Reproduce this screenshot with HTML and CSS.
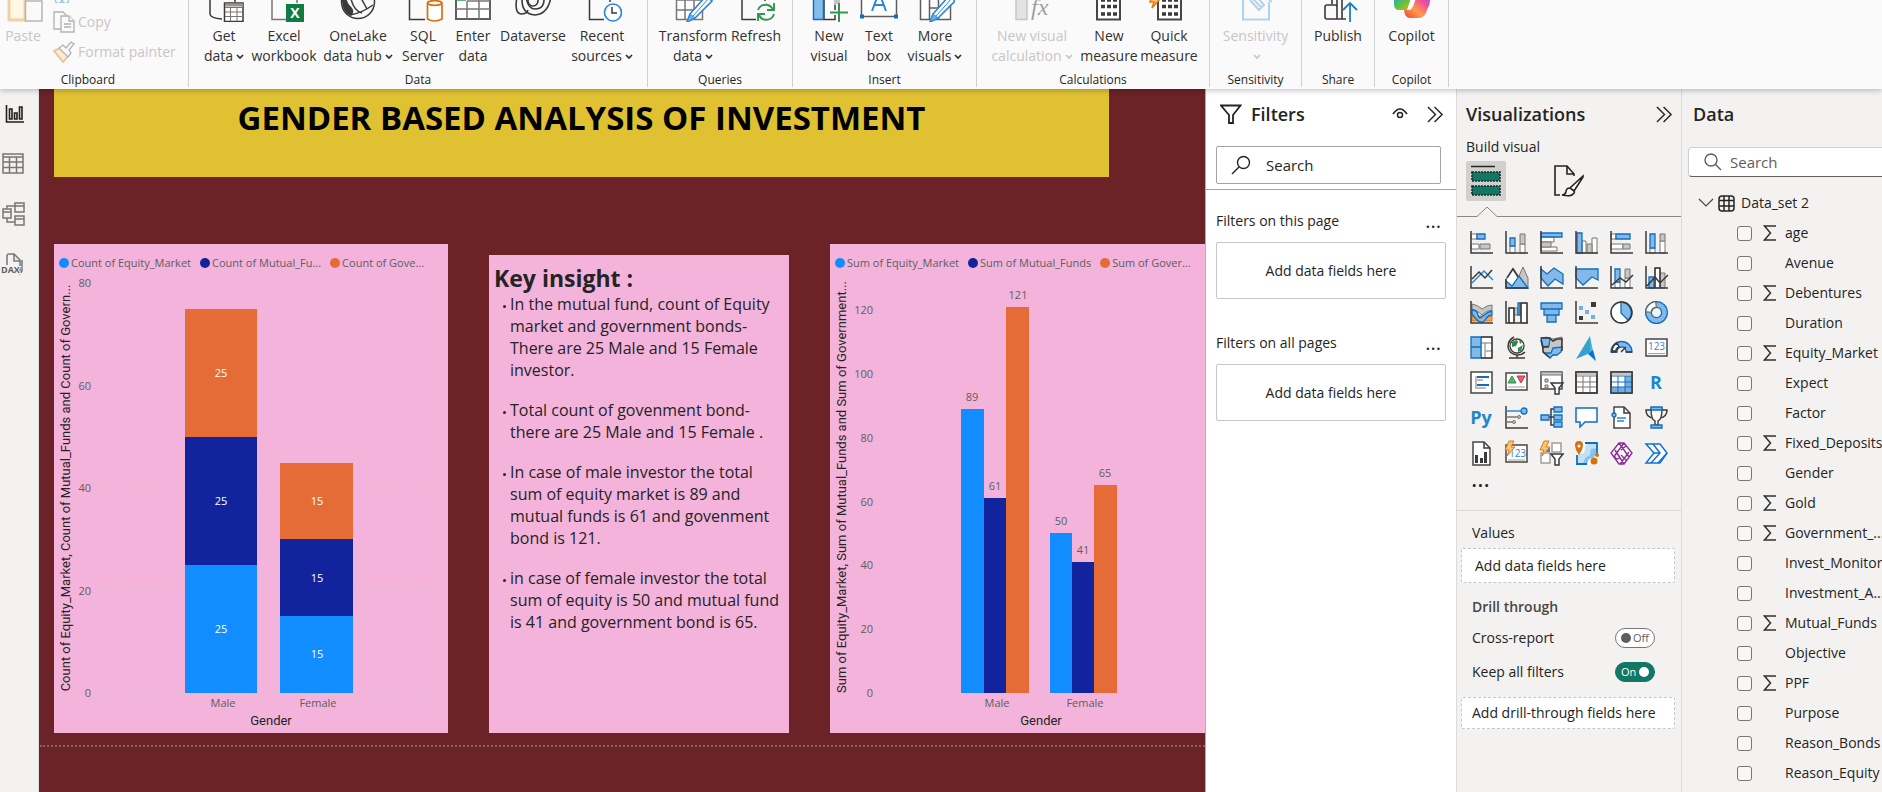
FILE: index.html
```html
<!DOCTYPE html>
<html lang="en">
<head>
<meta charset="utf-8">
<title>Gender based analysis of investment</title>
<link rel="stylesheet" href="styles.css">
</head>
<body>
<svg class="defs" width="0" height="0" aria-hidden="true">
  <defs>
    <linearGradient id="cop1" x1="0" y1="0" x2="1" y2="1"><stop offset="0" stop-color="#1fa3d8"/><stop offset=".5" stop-color="#5fc43f"/><stop offset="1" stop-color="#f5a623"/></linearGradient>
    <linearGradient id="cop2" x1="0" y1="1" x2="1" y2="0"><stop offset="0" stop-color="#f0442e"/><stop offset=".4" stop-color="#ff9a4d"/><stop offset=".7" stop-color="#f2528f"/><stop offset="1" stop-color="#a34cf0"/></linearGradient>
    <symbol id="pencil" viewBox="0 0 28 24"><path d="M1 23l3-8L20-3l6 5L9 19z" fill="#fff" stroke="#2b88d8" stroke-width="1.6"/><path d="M1 23l3-8 5 4z" fill="#69afe5" stroke="#2b88d8"/><path d="M7 17L24-2" stroke="#2b88d8"/></symbol>
    <symbol id="caret" viewBox="0 0 8 6"><path d="M1 1l3 3 3-3" fill="none" stroke="currentColor" stroke-width="1.7"/></symbol>
    <symbol id="sigma" viewBox="0 0 14 16"><path d="M13 1H1.500l6 7-6 7H13" fill="none" stroke="#323130" stroke-width="1.500"/></symbol>
    <symbol id="dbl" viewBox="0 0 18 18"><path d="M1 1l8 8-8 8M8 1l8 8-8 8" fill="none" stroke="#252423" stroke-width="1.500"/></symbol>
  </defs>
</svg>

<header class="ribbon">
  <section class="group clipboard">
    <div class="tools">
      <button class="tool off"><svg width="40" height="22"><path d="M6-4v24h16V-4" fill="#fff7e6" stroke="#f3cfa4" stroke-width="3"/><path d="M22.500 1H39v20H22.500z" fill="#fafafa" stroke="#b8b6b4" stroke-width="1.500"/></svg><span>Paste</span></button>
      <div class="side">
        <svg class="cut" width="16" height="3"><path d="M4-2a3 3 0 1 0 3 0M11-2a3 3 0 1 0 3 0" fill="none" stroke="#9cc6e6" stroke-width="1.500"/></svg>
        <button class="mini"><svg width="22" height="22" fill="#fafafa" stroke="#b5b3b1" stroke-width="1.300"><path d="M1 1h9l3 3v14H1z"/><path d="M8 5h8l5 5v11H8z"/><path d="M16 5v5h5M11 13h7M11 16h7"/></svg>Copy</button>
        <button class="mini"><svg width="22" height="22"><path d="M1 10l8-4 7 8-6 7z" fill="#fdebd7" stroke="#efb98a" stroke-width="1.500"/><path d="M6 7l4-3 3 3 5-6 3 2-5 6 2 3-3 4z" fill="#fafafa" stroke="#b5b3b1" stroke-width="1.300"/></svg>Format painter</button>
      </div>
    </div>
    <h2>Clipboard</h2>
  </section>
  <section class="group data">
    <div class="tools">
      <button class="tool"><svg width="40" height="22"><path d="M6-4V14q0 4 12 5M31-2v4" fill="none" stroke="#3b3a39" stroke-width="1.500"/><path d="M20.500 3H39v18.500H20.500z" fill="#fff" stroke="#3b3a39" stroke-width="1.500"/><path d="M21 3.500h18v3H21z" fill="#979593"/><path d="M21 7.500h18M21 12h18M21 16.500h18M26.500 7v14M33 7v14" stroke="#797775"/></svg><span>Get<br>data<svg class="ct"><use href="#caret"/></svg></span></button>
      <button class="tool"><svg width="40" height="22"><path d="M8-4v23.500h15M33-2v5" fill="none" stroke="#797775" stroke-width="1.500"/><path d="M22 4h18v18H22z" fill="#107c41"/><text x="31" y="18" class="xl">X</text></svg><span>Excel<br>workbook</span></button>
      <button class="tool"><svg width="40" height="22"><circle cx="20" cy="2" r="16.500" fill="#fafafa" stroke="#3b3a39" stroke-width="1.500"/><path d="M4-3Q3 12 13 16Q17 12 14 8Q9 4 8-3z" fill="#3b3a39"/><path d="M13-1q3 12 11 14M12 15q12-2 23-10M23-2l6 11" fill="none" stroke="#3b3a39" stroke-width="1.500"/></svg><span>OneLake<br>data hub<svg class="ct"><use href="#caret"/></svg></span></button>
      <button class="tool"><svg width="40" height="22"><path d="M6.500-4v23.500H22M34-3v4" fill="none" stroke="#3b3a39" stroke-width="1.500"/><path d="M24.500 3v16q7 4 14.500 0V3" fill="#fff" stroke="#d8700f" stroke-width="1.700"/><ellipse cx="31.700" cy="3" rx="7.200" ry="2.300" fill="#fff" stroke="#d8700f" stroke-width="1.700"/></svg><span>SQL<br>Server</span></button>
      <button class="tool"><svg width="40" height="22"><path d="M3-3h34v22H3z" fill="#fff" stroke="#605e5c" stroke-width="2"/><path d="M3 9h34M14 1v18M26-3v22M14 1h23" stroke="#797775" stroke-width="1.500"/><path d="M3 0h10" stroke="#2e9e4b" stroke-width="1.500"/></svg><span>Enter<br>data</span></button>
      <button class="tool"><svg width="40" height="22" fill="none" stroke="#3b3a39" stroke-width="1.600"><path d="M4-3q-3 16 4 17q6 0 7-4M9 0q0 14 13 15Q35 14 38-3M13-3q2 12 9 12q10 0 9-12"/><circle cx="20" cy="1" r="5"/></svg><span>Dataverse</span></button>
      <button class="tool"><svg width="40" height="22"><path d="M7.500-4v23.500H22M28-3v5" fill="none" stroke="#3b3a39" stroke-width="1.500"/><circle cx="31" cy="12.500" r="8.500" fill="#fff" stroke="#2b88d8" stroke-width="1.700"/><path d="M30 7v6h5" fill="none" stroke="#3b3a39" stroke-width="1.500"/></svg><span>Recent<br>sources<svg class="ct"><use href="#caret"/></svg></span></button>
    </div>
    <h2>Data</h2>
  </section>
  <section class="group queries">
    <div class="tools">
      <button class="tool"><svg width="40" height="22"><path d="M3.500-4h26v23.500h-26zM3.500 0h26M3.500 10h26M12-4v23M21-4v23" fill="#fff" stroke="#797775" stroke-width="1.500"/><use href="#pencil" x="13" y="-1" width="28" height="24"/></svg><span>Transform<br>data<svg class="ct"><use href="#caret"/></svg></span></button>
      <button class="tool"><svg width="40" height="22"><path d="M6-4v23.500h14M29-3v4" fill="none" stroke="#3b3a39" stroke-width="1.500"/><path d="M22 10a8 8 0 0 1 15 0M38 14a8 8 0 0 1-15 1M38 3v7h-7M22 21v-7h7" fill="none" stroke="#2e9950" stroke-width="1.900"/></svg><span>Refresh</span></button>
    </div>
    <h2>Queries</h2>
  </section>
  <section class="group insert">
    <div class="tools">
      <button class="tool"><svg width="40" height="22"><path d="M15-4h11v23.500H15z" fill="#fff" stroke="#3b3a39" stroke-width="1.500"/><path d="M25-4h6V5h-6z" fill="#c8c6c4"/><path d="M4.500-4h10v23.500h-10z" fill="#83beec" stroke="#106ebe" stroke-width="1.500"/><path d="M20 12.500h19M30 4v18" stroke="#fafafa" stroke-width="5"/><path d="M21 12.500h18M30 3v19" stroke="#2e9950" stroke-width="2"/></svg><span>New<br>visual</span></button>
      <button class="tool"><svg width="40" height="22"><path d="M2.500-4v20.500h35V-4" fill="#fff" stroke="#605e5c" stroke-width="1.500"/><path d="M13 11l6-16h2l6 16M15.500 5h9" fill="none" stroke="#2b88d8" stroke-width="2"/><path d="M1 14.500h4v4H1zM35 14.500h4v4h-4z" fill="#106ebe"/></svg><span>Text<br>box</span></button>
      <button class="tool"><svg width="40" height="22"><path d="M5.500-4h9v23.500h-9zM14.500 8h9v11.500h-9zM23.500-4h12v23.500h-12z" fill="#fff" stroke="#605e5c" stroke-width="1.500"/><use href="#pencil" x="14" y="-1" width="28" height="24"/></svg><span>More<br>visuals<svg class="ct"><use href="#caret"/></svg></span></button>
    </div>
    <h2>Insert</h2>
  </section>
  <section class="group calcs">
    <div class="tools">
      <button class="tool off"><svg width="40" height="22"><path d="M4-4h11v23.500H4z" fill="#e4e3e2" stroke="#c8c6c4" stroke-width="1.500"/><text x="19" y="15" class="fx">fx</text></svg><span>New visual<br>calculation<svg class="ct"><use href="#caret"/></svg></span></button>
      <button class="tool"><svg width="40" height="22"><path d="M8-4h23v23.500H8z" fill="#fff" stroke="#484644" stroke-width="2"/><path d="M12 0h16M12 6.500h16M12 14h16" stroke="#3b3a39" stroke-width="3.500" stroke-dasharray="4 2"/></svg><span>New<br>measure</span></button>
      <button class="tool"><svg width="40" height="22"><path d="M9-4h23v23.500H9z" fill="#fff" stroke="#484644" stroke-width="2"/><path d="M13 0h16M13 6.500h16M13 14h16" stroke="#3b3a39" stroke-width="3.500" stroke-dasharray="4 2"/><path d="M3-4L1 2h4L3 8l8-9V-4z" fill="#fdc37a" stroke="#e07b10" stroke-width="1.500"/></svg><span>Quick<br>measure</span></button>
    </div>
    <h2>Calculations</h2>
  </section>
  <section class="group sens">
    <div class="tools">
      <button class="tool off"><svg width="40" height="22"><path d="M7-4v23.500h26V2" fill="none" stroke="#b0d3ec" stroke-width="2"/><path d="M14 0l9 10 5-5-7-8M17-1l8 8M31-2l5 4" fill="none" stroke="#b0d3ec" stroke-width="2"/></svg><span>Sensitivity<br><svg class="ct"><use href="#caret"/></svg></span></button>
    </div>
    <h2>Sensitivity</h2>
  </section>
  <section class="group share">
    <div class="tools">
      <button class="tool"><svg width="40" height="22" fill="none"><path d="M14-4v8M7 7q0-2 2-2h8q2 0 2 2v12H9q-2 0-2-2zM19-4v23h9M24-4V19" stroke="#3b3a39" stroke-width="1.600"/><path d="M32 22V3M25 10l7-7 7 7" stroke="#1b7fc4" stroke-width="1.800"/></svg><span>Publish</span></button>
    </div>
    <h2>Share</h2>
  </section>
  <section class="group copi">
    <div class="tools">
      <button class="tool"><svg width="40" height="22"><path d="M2-4v8q0 6 5 6h8l5-14z" fill="url(#cop1)"/><path d="M12 10h5q3 0 4-5l2-9h15q1 8-3 14-2 8-9 8H18q-5 0-6-8z" fill="url(#cop2)"/><path d="M16 8l4-12h5l-4 10q-1 2-3 2z" fill="#fff"/></svg><span>Copilot</span></button>
    </div>
    <h2>Copilot</h2>
  </section>
</header>

<main class="work">
  <nav class="rail">
    <button aria-label="Report view"><svg width="24" height="24" fill="none" stroke="#201f1e" stroke-width="1.600"><path d="M4.500 3v17H22M7.500 7h2.500v10H7.500zM12.500 11H15v6h-2.500zM17.500 5H20v12h-2.500z"/></svg></button>
    <button aria-label="Table view"><svg width="24" height="24" fill="none" stroke="#797775" stroke-width="1.500"><path d="M1 2h20v19H1zM1 5h20M1 10h20M1 15.500h20M7.500 5v16M14.500 5v16"/></svg></button>
    <button aria-label="Model view"><svg width="24" height="24" fill="none" stroke="#797775" stroke-width="1.500"><path d="M1 7h8v9H1zM1 10h8M13 1h9v9h-9zM13 4h9M13 14h9v9h-9zM13 17h9M5 7V4h8M5 16v4h8"/></svg></button>
    <button aria-label="DAX query view"><svg width="24" height="24" fill="none" stroke="#797775" stroke-width="1.500"><path d="M5 13V4q0-2 2-2h5l6 6v10q0 2-2 2M12 2v7h6M20 8v10q0 3-3 4"/><text x="-1" y="21" class="dax">DAX</text></svg></button>
  </nav>

  <div class="canvas">
    <h1>GENDER BASED ANALYSIS OF INVESTMENT</h1>
    <div class="cards">
      <figure class="card chart">
        <ul class="legend"><li class="c1">Count of Equity_Market</li><li class="c2">Count of Mutual_Fu...</li><li class="c3">Count of Gove...</li></ul>
        <svg class="plot" viewBox="54 274 394 459">
          <path class="grid" d="M98 283.500H444M98 385.500H444M98 488.500H444M98 590.500H444M98 692.500H444"/>
          <g class="axis end"><text x="91" y="287">80</text><text x="91" y="390">60</text><text x="91" y="492">40</text><text x="91" y="595">20</text><text x="91" y="697">0</text></g>
          <path class="b1" d="M185 565h72v128h-72zM280 616h73v77h-73z"/>
          <path class="b2" d="M185 437h72v128h-72zM280 539h73v77h-73z"/>
          <path class="b3" d="M185 309h72v128h-72zM280 463h73v76h-73z"/>
          <g class="val"><text x="221" y="377">25</text><text x="221" y="505">25</text><text x="221" y="633">25</text><text x="317" y="505">15</text><text x="317" y="582">15</text><text x="317" y="658">15</text></g>
          <g class="axis"><text x="223" y="707">Male</text><text x="318" y="707">Female</text></g>
          <text class="name" x="271" y="725">Gender</text>
          <text class="name" transform="translate(70 488) rotate(-90)">Count of Equity_Market, Count of Mutual_Funds and Count of Govern...</text>
        </svg>
      </figure>
      <article class="card note">
        <h3>Key insight :</h3>
        <ul>
          <li>In the mutual fund, count of Equity<br>market and government bonds-<br>There are 25 Male and 15 Female<br>investor.</li>
          <li>Total count of govenment bond-<br>there are 25 Male and 15 Female .</li>
          <li>In case of male investor the total<br>sum of equity market is 89 and<br>mutual funds is 61 and govenment<br>bond is 121.</li>
          <li>in case of female investor the total<br>sum of equity is 50 and mutual fund<br>is 41 and government bond is 65.</li>
        </ul>
      </article>
      <figure class="card chart">
        <ul class="legend"><li class="c1">Sum of Equity_Market</li><li class="c2">Sum of Mutual_Funds</li><li class="c3">Sum of Gover...</li></ul>
        <svg class="plot" viewBox="830 274 375 459">
          <path class="grid" d="M881 310.500H1198M881 374.500H1198M881 438.500H1198M881 501.500H1198M881 565.500H1198M881 629.500H1198M881 692.500H1198"/>
          <g class="axis end"><text x="873" y="314">120</text><text x="873" y="378">100</text><text x="873" y="442">80</text><text x="873" y="506">60</text><text x="873" y="569">40</text><text x="873" y="633">20</text><text x="873" y="697">0</text></g>
          <path class="b1" d="M961 409h23v284h-23zM1050 533h22v160h-22z"/>
          <path class="b2" d="M984 498h22v195h-22zM1072 562h22v131h-22z"/>
          <path class="b3" d="M1006 307h23v386h-23zM1094 485h23v208h-23z"/>
          <g class="axis"><text x="972" y="401">89</text><text x="995" y="490">61</text><text x="1018" y="299">121</text><text x="1061" y="525">50</text><text x="1083" y="554">41</text><text x="1105" y="477">65</text><text x="997" y="707">Male</text><text x="1085" y="707">Female</text></g>
          <text class="name" x="1041" y="725">Gender</text>
          <text class="name" transform="translate(846 487) rotate(-90)">Sum of Equity_Market, Sum of Mutual_Funds and Sum of Government...</text>
        </svg>
      </figure>
    </div>
    <hr>
  </div>

  <aside class="filters">
    <header><svg width="22" height="20" fill="none" stroke="#252423" stroke-width="1.800"><path d="M1 1.500h19.500L13 11v8H9v-8z"/></svg><h2>Filters</h2>
      <button aria-label="Show filters"><svg width="16" height="12" fill="none" stroke="#252423" stroke-width="1.500"><path d="M1 6q7-10 14 0"/><circle cx="8" cy="7" r="2.500"/></svg></button>
      <button aria-label="Collapse filters"><svg width="17" height="17"><use href="#dbl"/></svg></button></header>
    <label class="find"><svg width="20" height="20" fill="none" stroke="#252423" stroke-width="1.400"><circle cx="12.500" cy="7.500" r="6"/><path d="M8 12l-7 7"/></svg><input type="text" placeholder="Search" aria-label="Search filters"></label>
    <section><h3>Filters on this page</h3><button class="more">...</button><div class="drop">Add data fields here</div></section>
    <section><h3>Filters on all pages</h3><button class="more">...</button><div class="drop">Add data fields here</div></section>
  </aside>

  <aside class="viz">
    <header><h2>Visualizations</h2><button aria-label="Collapse visualizations"><svg width="17" height="17"><use href="#dbl"/></svg></button></header>
    <h3>Build visual</h3>
    <div class="modes">
      <button class="on" aria-label="Build visual"><svg width="30" height="32"><path d="M0 1.500h24" stroke="#252423" stroke-width="1.500"/><path d="M1 7h28v9H1zM1 21h28v9H1z" fill="#117865"/><path d="M1 7h28v9H1zM1 21h28v9H1z" fill="none" stroke="#252423" stroke-width="1.600" stroke-dasharray="2 1"/></svg></button>
      <button aria-label="Format visual"><svg width="32" height="32" fill="none" stroke="#252423" stroke-width="1.600"><path d="M7 30H2V1h12l7 8v2M14 1v8h7"/><path d="M30 11L17 23l4 3 9-14zM17 23q-4 0-4 4-1 3-4 3 9 2 11-1 2-1 1-3" fill="#fff"/></svg></button>
    </div>
    <svg class="tabline" viewBox="0 0 225 11" preserveAspectRatio="xMinYMin slice" fill="none" stroke="#8a8886"><path d="M0 10.500H20L30 1l10 9.500H900"/></svg>
    <div class="gallery">
      <button><svg viewBox="0 0 23 23"><path class="w" d="M1 3h6v5H1zM1 13h8v5H1z"/><path class="b" d="M7 3h8v5H7z"/><path class="g" d="M10 13h10v5H10z"/><path class="k" d="M1 0v22h22"/></svg></button>
      <button><svg viewBox="0 0 23 23"><path class="w" d="M5 15h5v7H5zM15 13h5v9h-5z"/><path class="b" d="M5 7h5v8H5z"/><path class="g" d="M15 3h5v10h-5z"/><path class="k" d="M1 0v22h22"/></svg></button>
      <button><svg viewBox="0 0 23 23"><path class="w" d="M1 6h13v5H1zM1 16h16v4H1z"/><path class="b" d="M1 2h21v4H1z"/><path class="g" d="M1 11h10v5H1z"/><path class="k" d="M1 0v22h22"/></svg></button>
      <button><svg viewBox="0 0 23 23"><path class="w" d="M7 10h4v12H7zM17 7h5v15h-5z"/><path class="b" d="M2 2h5v20H2z"/><path class="g" d="M12 13h5v9h-5z"/><path class="k" d="M1 0v22h22"/></svg></button>
      <button><svg viewBox="0 0 23 23"><path class="w" d="M1 3h5v5H1zM1 13h12v5H1z"/><path class="b" d="M6 3h14v5H6z"/><path class="g" d="M13 13h7v5h-7z"/><path class="k" d="M1 0v22h22"/></svg></button>
      <button><svg viewBox="0 0 23 23"><path class="w" d="M5 17h5v5H5zM15 10h5v12h-5z"/><path class="b" d="M5 3h5v14H5z"/><path class="g" d="M15 3h5v7h-5z"/><path class="k" d="M1 0v22h22"/></svg></button>

      <button><svg viewBox="0 0 23 23"><path class="bl" d="M2 17l12-12 9 9"/><path class="k" d="M2 13l7-7 6 6 7-8M1 0v22h22"/></svg></button>
      <button><svg viewBox="0 0 23 23"><path class="g" d="M18 1l5 11v10H13V12z"/><path class="w" d="M1 13L8 2l6 9v11H1z"/><path class="b" d="M1 15l6 5 7-10 9 12H1z"/><path class="k" d="M1 13v9h22M2 12l6-9 5 8"/></svg></button>
      <button><svg viewBox="0 0 23 23"><path class="b" d="M1 3l6 5 7-6 9 6v10l-8-5-7 7-7-8z"/><path class="k" d="M1 0v22h22"/></svg></button>
      <button><svg viewBox="0 0 23 23"><path class="b" d="M1 3h22v11l-6-3-9 8-7-7z"/><path class="k" d="M1 0v22h22"/></svg></button>
      <button><svg viewBox="0 0 23 23"><path class="w" d="M5 16h5v6H5zM15 12h5v10h-5z"/><path class="b" d="M5 3h5v13H5z"/><path class="g" d="M15 3h5v9h-5z"/><path class="k" d="M1 0v22h22M2 19l8-7 6 4 7-7"/></svg></button>
      <button><svg viewBox="0 0 23 23"><path class="b" d="M4 11h5v11H4z"/><path class="g" d="M15 7h5v15h-5z"/><path class="w" d="M10 2h5v20h-5z"/><path class="k" d="M1 0v22h22M2 20l8-9 5 6 8-8M10 22V2h5v20"/></svg></button>

      <button><svg viewBox="0 0 23 23"><path class="o" d="M2 15h20v5H2z"/><path class="g" d="M2 3q6 1 10 5 5-4 10-4v5q-6 0-10 5Q7 9 2 8z"/><path class="b" d="M2 9q5 0 6 5t5 1 9-5v4q-4 0-7 5t-9-1l-4-5z"/><path class="k" d="M1 0v22h22"/></svg></button>
      <button><svg viewBox="0 0 23 23"><path class="w" d="M4 7h5v15H4zM16 2h6v20h-6z"/><path class="g" d="M9 7h4v7H9z"/><path class="b" d="M13 2h2v12h-2z"/><path class="k" d="M1 0v22h22M4 22V7h5v15M16 22V2h6v20"/></svg></button>
      <button><svg viewBox="0 0 23 23"><path class="b" d="M1 2h21v6H1zM4 8h15v6H4zM7 14h9v7H7z"/></svg></button>
      <button><svg viewBox="0 0 23 23"><path class="k" d="M1 0v22h22"/><path d="M16 1h5v5h-5zM4 15h4v4H4z" fill="#3b3a39"/><path d="M4 5h4v4H4zM10 9h4v4h-4zM16 14h4v4h-4z" fill="#71afe5"/></svg></button>
      <button><svg viewBox="0 0 23 23"><circle class="w" cx="11.500" cy="11.500" r="10.500"/><path class="b" d="M11 1a10.500 10.500 0 0 1 7 18l-7-7z"/><circle class="k" cx="11.500" cy="11.500" r="10.500"/></svg></button>
      <button><svg viewBox="0 0 23 23"><circle cx="11.500" cy="11.500" r="8" fill="none" stroke="#106ebe" stroke-width="7"/><circle cx="11.500" cy="11.500" r="8" fill="none" stroke="#83b9e9" stroke-width="4.500"/><path d="M3.500 11.500a8 8 0 0 1 8-8" fill="none" stroke="#605e5c" stroke-width="7"/><path d="M3.500 10.500a8 8 0 0 1 7-7" fill="none" stroke="#fff" stroke-width="4.500"/></svg></button>

      <button><svg viewBox="0 0 23 23"><path class="w" d="M11 1h11v21H11zM11 7h11M15 7v15M16 15h6"/><path class="b" d="M1 1h10v10H1zM1 11h10v11H1z"/><path class="k" d="M11 1h11v21H11"/></svg></button>
      <button><svg viewBox="0 0 23 23"><circle cx="12" cy="10" r="7" fill="#fff" stroke="#3b3a39" stroke-width="1.300"/><path d="M7 6l5-2 1 2-2 4-4 1zM13 12l5-3-2 6-3 1zM14 4l3 2-2 2z" fill="#2d8a46"/><path class="k" d="M9 1Q3 4 3 11q1 7 9 8 5 0 8-3M12 19v3M4 22h16"/></svg></button>
      <button><svg viewBox="0 0 23 23"><path class="g" d="M1 3l5-2 7 2 9-2-1 13-4 5-4 0-3 3-7-7z"/><path class="b" d="M1 2h9l-1 8-6 1zM13 12l9-1-1 5-4 3-4 0-3 3-6-5 7 0z"/><path class="k" d="M1 2h8l4 3 4-2h5v12M3 11h6M1 4l2 8v4l6 5"/></svg></button>
      <button><svg viewBox="0 0 23 25"><path d="M15 0L1 23l14-6z" fill="#3aa0cf"/><path d="M15 0l5 25-5-8z" fill="#45b5df"/><path d="M13 18l8 7-3-11z" fill="#0078d4"/></svg></button>
      <button><svg viewBox="0 0 23 23"><path class="b" d="M1 16a10.500 10.500 0 0 1 21 0h-6q0-5-4-5-5 0-5 5z"/><path d="M2 15q0-5 5-8l2 4q-3 1-3 4z" fill="#fff" stroke="#3b3a39" stroke-width="1.500"/><path class="k" d="M11 16l5-5M1 16h6M16 16h6"/></svg></button>
      <button><svg viewBox="0 0 23 23"><path class="w2" d="M1 3h21v17H1z"/><text x="11.500" y="14" class="num">123</text><path d="M3 17.500h17" stroke="#a19f9d"/></svg></button>

      <button><svg viewBox="0 0 23 23"><path class="w2" d="M1 1h21v21H1z"/><path d="M6 5v13" stroke="#797775"/><path d="M7 6h12M7 14h12" stroke="#106ebe" stroke-width="2"/><path d="M7 9h6M7 17h9" stroke="#797775"/></svg></button>
      <button><svg viewBox="0 0 23 23"><path class="w2" d="M1 2h21v17H1z"/><path d="M3 12l4-7 4 7z" fill="#5bb56c" stroke="#2d8a46"/><path d="M12 5h8l-4 7z" fill="#e8606b" stroke="#c4314b"/><path d="M3 16h17" stroke="#a19f9d"/></svg></button>
      <button><svg viewBox="0 0 23 23"><path class="w2" d="M1 1h21v17H1z"/><path class="g" d="M1 1h21v3H1zM5 8h3v3H5zM5 14h3v3H5z"/><path d="M11 12h12l-4 5v6h-4v-6z" fill="#fff" stroke="#3b3a39" stroke-width="1.500"/></svg></button>
      <button><svg viewBox="0 0 23 23"><path class="w2" d="M1 1h21v21H1z"/><path d="M1 1h21v3H1z" fill="#c8c6c4"/><path d="M1 5h21M1 11h21M1 16h21M8 5v17M15 5v17" stroke="#797775"/><path class="k" d="M1 1h21v21H1z"/></svg></button>
      <button><svg viewBox="0 0 23 23"><path class="w2" d="M1 1h21v21H1z"/><path d="M15 5h7v17H1v-6h14z" fill="#71afe5"/><path d="M1 1h21v3H1z" fill="#c8c6c4"/><path d="M1 5h21M1 11h21M1 16h21M8 5v17M15 5v17" stroke="#106ebe"/><path class="k" d="M1 1h21v21H1z"/></svg></button>
      <button><svg viewBox="0 0 23 23"><text x="11" y="18" class="py">R</text></svg></button>

      <button><svg viewBox="0 0 23 23"><text x="11" y="18" class="py">Py</text></svg></button>
      <button><svg viewBox="0 0 23 23"><path class="k" d="M1 0v22h22"/><path class="bl" d="M1 5h15"/><path d="M1 11h12M1 16h7" stroke="#797775" stroke-width="1.500"/><circle class="b" cx="19" cy="5" r="3"/><circle class="g" cx="14" cy="11" r="1.500"/><circle class="g" cx="9" cy="16" r="1.500"/></svg></button>
      <button><svg viewBox="0 0 23 23"><path class="k" d="M8 11h6M14 3h-3v16h4"/><path class="b" d="M1 9h8v5H1zM14 1h8v5h-8zM14 9h8v5h-8zM14 16h8v5h-8z"/></svg></button>
      <button><svg viewBox="0 0 23 23"><path d="M1 2h21v14H10l-5 5v-5H1z" fill="#fff" stroke="#106ebe" stroke-width="1.500"/></svg></button>
      <button><svg viewBox="0 0 23 23"><path class="w2" d="M4 1h10l6 6v15H4z"/><path class="k" d="M14 1v6h6"/><path class="bl" d="M7 12h9M7 15h7" /><circle class="b" cx="4" cy="9" r="2"/></svg></button>
      <button><svg viewBox="0 0 23 23"><path class="k" d="M6 4H1q0 7 7 8M17 4h5q0 7-7 8"/><path class="w2" d="M6 2h11q0 12-4 13v4h-3v-4Q6 14 6 2z"/><path class="b" d="M6 1h11v3H6zM6 19h11v3H6z"/></svg></button>

      <button><svg viewBox="0 0 23 25"><path class="w2" d="M3 1h11l6 6v17H3z"/><path class="k" d="M14 1v6h6"/><path d="M5 14h3v8H5zM10 17h3v5h-3zM14 11h3v11h-3z" fill="#3b3a39"/></svg></button>
      <button><svg viewBox="0 0 23 25"><path class="w2" d="M1 4h21v17H1z"/><text x="12.500" y="16" class="num">123</text><path d="M3 19h17" stroke="#a19f9d"/><path class="z" d="M4 0L0 9h4l-2 6 8-9H6l3-6z"/></svg></button>
      <button><svg viewBox="0 0 23 25"><path d="M12 2h9v9h-9zM1 12h9v10H1z" fill="#fff" stroke="#a19f9d" stroke-width="1.500"/><path d="M6 6h4v5H6z" fill="#2b88d8"/><path d="M11 13h12l-4 5v6h-4v-6z" fill="#fff" stroke="#3b3a39" stroke-width="1.500"/><path class="z" d="M4 0L0 9h4l-2 6 8-9H6l3-6z"/></svg></button>
      <button><svg viewBox="0 0 23 25"><path d="M2 2h20v21H2z" fill="#fff"/><path d="M2 23V14l7-2 2-10h11v5l-6 2 0 6-5 2-2 6z" fill="#83c3f0" opacity=".5"/><path d="M16 8l6-1v5l-4 5-4 1-2 5H8l2-6 5-3z" fill="#83c3f0"/><path d="M22 12V2H10M2 14v9h10" fill="none" stroke="#106ebe" stroke-width="1.800"/><path d="M0 4a4 4 0 0 1 8 0q0 4-4 10Q0 8 0 4z" fill="#d8700f"/><circle cx="4" cy="5" r="1.500" fill="#fff"/><circle cx="19" cy="20" r="3.500" fill="#d8700f"/><circle cx="22" cy="14" r="2" fill="#d8700f"/></svg></button>
      <button><svg viewBox="0 0 23 25" fill="#fff" stroke="#8b2f96" stroke-width="1.400"><path d="M9 2h5l8 10-8 11H9L1 12zM9 2l10 14M14 2L5 14q-1 3 2 4 2 0 3-2M14 23L5 9M11 9l5-4M11 14l5 5M10 23l9-12"/></svg></button>
      <button><svg viewBox="0 0 23 25" fill="#fff" stroke="#1272d6" stroke-width="1.500"><path d="M1 3h14l7 9-7 10H1l8-10z"/><path d="M8 3l7 9-9 10M9 12h6M13 22l9-10" fill="none"/></svg></button>
    </div>
    <button class="dots">...</button>
    <div class="wells">
      <h4>Values</h4>
      <div class="well tall">Add data fields here</div>
      <h4 class="strong">Drill through</h4>
      <label class="row"><span>Cross-report</span><span class="switch"><input type="checkbox"><i>Off</i></span></label>
      <label class="row"><span>Keep all filters</span><span class="switch"><input type="checkbox" checked><i>On</i></span></label>
      <div class="well">Add drill-through fields here</div>
    </div>
  </aside>

  <aside class="fields">
    <header><h2>Data</h2></header>
    <label class="find"><svg width="18" height="18" fill="none" stroke="#605e5c" stroke-width="1.400"><circle cx="7" cy="7" r="6"/><path d="M11.500 11.500L17 17"/></svg><input type="text" placeholder="Search" aria-label="Search data"></label>
    <button class="table"><svg width="16" height="10" fill="none" stroke="#484644" stroke-width="1.200"><path d="M1 1l7 7 7-7"/></svg><svg width="17" height="17" fill="none" stroke="#252423" stroke-width="1.500"><rect x="1" y="1" width="15" height="15" rx="3"/><path d="M6 1v15M11 1v15M1 5.500h15M1 11h15"/></svg>Data_set 2</button>
    <ul>
      <li><label><input type="checkbox"><svg><use href="#sigma"/></svg>age</label></li>
      <li><label><input type="checkbox"><svg></svg>Avenue</label></li>
      <li><label><input type="checkbox"><svg><use href="#sigma"/></svg>Debentures</label></li>
      <li><label><input type="checkbox"><svg></svg>Duration</label></li>
      <li><label><input type="checkbox"><svg><use href="#sigma"/></svg>Equity_Market</label></li>
      <li><label><input type="checkbox"><svg></svg>Expect</label></li>
      <li><label><input type="checkbox"><svg></svg>Factor</label></li>
      <li><label><input type="checkbox"><svg><use href="#sigma"/></svg>Fixed_Deposits</label></li>
      <li><label><input type="checkbox"><svg></svg>Gender</label></li>
      <li><label><input type="checkbox"><svg><use href="#sigma"/></svg>Gold</label></li>
      <li><label><input type="checkbox"><svg><use href="#sigma"/></svg>Government_...</label></li>
      <li><label><input type="checkbox"><svg></svg>Invest_Monitor</label></li>
      <li><label><input type="checkbox"><svg></svg>Investment_A...</label></li>
      <li><label><input type="checkbox"><svg><use href="#sigma"/></svg>Mutual_Funds</label></li>
      <li><label><input type="checkbox"><svg></svg>Objective</label></li>
      <li><label><input type="checkbox"><svg><use href="#sigma"/></svg>PPF</label></li>
      <li><label><input type="checkbox"><svg></svg>Purpose</label></li>
      <li><label><input type="checkbox"><svg></svg>Reason_Bonds</label></li>
      <li><label><input type="checkbox"><svg></svg>Reason_Equity</label></li>
    </ul>
  </aside>
</main>
</body>
</html>
```

FILE: styles.css
```css
* { box-sizing: border-box; margin: 0; padding: 0; }
body {
  height: 100vh; overflow: hidden; display: flex; flex-direction: column;
  font: 14px/20px "Open Sans", "Noto Sans", sans-serif; color: #252423; background: #f3f2f1;
}
button { font: inherit; color: inherit; background: none; border: 0; }
input { font: inherit; color: inherit; }
ul { list-style: none; }
h2, h3, h4 { font-weight: 400; font-size: 14px; }
svg { display: block; flex: none; }
.defs { position: absolute; }

/* ribbon */
.ribbon { display: flex; flex: none; height: 89px; background: #fafafa; box-shadow: 0 1px 6px rgba(0, 0, 0, .28); position: relative; z-index: 1; }
.group { display: flex; flex-direction: column; border-right: 1px solid #d2d0ce; height: 87px; }
.group h2 { font-size: 12px; line-height: 14px; text-align: center; }
.tools { display: grid; height: 73px; overflow: hidden; }
.tool { display: flex; flex-direction: column; align-items: center; justify-content: flex-start; gap: 4px; white-space: nowrap; line-height: 20px; font-size: 14px; color: #323130; }
.tool.off, .mini { color: #c8c6c4; }
.ct { display: inline-block; width: 8px; height: 6px; margin-left: 3px; vertical-align: 1px; }
.clipboard { width: 189px; padding-right: 12px; }
.clipboard .tools { grid-template-columns: 46px 1fr; }
.side { display: flex; flex-direction: column; align-items: flex-start; padding-left: 7px; }
.cut { height: 3px; margin-bottom: 4px; }
.mini { display: flex; align-items: center; gap: 3px; height: 30px; white-space: nowrap; }
.data { width: 459px; }
.data .tools { padding-left: 5px; grid-template-columns: 60px 60px 88px 42px 58px 62px 76px; }
.queries { width: 145px; }
.queries .tools { padding-left: 9px; grid-template-columns: 72px 54px; }
.insert { width: 184px; }
.insert .tools { padding-left: 10px; grid-template-columns: 52px 48px 64px; }
.calcs { width: 233px; }
.calcs .tools { padding-left: 8px; grid-template-columns: 94px 60px 60px; }
.sens { width: 92px; }
.share { width: 73px; }
.copi { width: 74px; }
.xl { font: bold 14px "Open Sans", sans-serif; fill: #fff; text-anchor: middle; }
.fx { font: italic 24px "Liberation Serif", serif; fill: #a19f9d; }

/* workspace */
.work { display: flex; flex: 1; min-height: 0; }
.rail { width: 39px; border-right: 1px solid #e1dfdd; padding: 13px 2px; display: flex; flex-direction: column; gap: 26px; }
.rail button { width: 24px; height: 24px; }
.rail svg { overflow: visible; }
.dax { font: bold 9px "Open Sans", sans-serif; fill: #605e5c; stroke: #f3f2f1; stroke-width: 2px; paint-order: stroke; }

.canvas { flex: 1; min-width: 0; background: #6b2327; padding-left: 15px; overflow: hidden; }
h1 { height: 88px; margin-right: 96px; background: #e0c132; color: #000; font-size: 33px; line-height: 58px; font-weight: 700; text-align: center; white-space: nowrap; }
.cards { display: grid; grid-template-columns: 394fr 300fr 375fr; gap: 41px; align-items: end; margin-top: 67px; }
.card { background: #f3b3db; min-width: 0; }
.note { height: 478px; padding: 10px 5px; }
.legend { display: flex; height: 30px; align-items: center; padding: 8px 5px 0; gap: 9px; font-size: 11px; color: #605e5c; white-space: nowrap; }
.legend li { display: flex; align-items: center; gap: 2px; }
.legend li::before { content: ""; width: 10px; height: 10px; border-radius: 50%; background: currentColor; }
.legend .c1::before { background: #118dff; }
.legend .c2::before { background: #12239e; }
.legend .c3::before { background: #e66c37; }
.plot { width: 100%; }
.b1 { fill: #118dff; } .b2 { fill: #12239e; } .b3 { fill: #e66c37; }
.grid { stroke: #dcc3d8; stroke-dasharray: 1 5; fill: none; }
.axis { font-size: 11px; fill: #605e5c; text-anchor: middle; }
.end { text-anchor: end; }
.val { font-size: 11px; fill: #fff; text-anchor: middle; }
.name { font: 13px Roboto, sans-serif; fill: #252423; text-anchor: middle; }
.note h3 { font-size: 23px; line-height: 26px; font-weight: 700; }
.note ul { font-size: 16px; line-height: 22px; padding: 2px 0 0 16px; white-space: nowrap; }
.note li { position: relative; margin-bottom: 18px; }
.note li::before { content: ""; position: absolute; left: -7px; top: 12px; width: 3px; height: 3px; border-radius: 50%; background: #252423; }
hr { border: 0; border-top: 2px dotted #77686a; margin: 12px 0 0 -14px; }

/* panes */
aside { flex: none; overflow: hidden; }
aside header { display: flex; align-items: center; height: 50px; }
aside header h2 { font-size: 18px; font-weight: 600; flex: 1; }
.filters { width: 251px; background: #fff; border-left: 1px solid #b3b0ad; }
.filters header { padding: 0 12px 0 14px; gap: 9px; }
.filters header button + button { margin-left: 10px; }
.find { display: flex; align-items: center; background: #fff; }
.find input { border: 0; outline: 0; background: none; width: 100%; font-size: 15px; }
.find input::placeholder { color: #252423; opacity: 1; }
.filters .find { height: 38px; margin: 7px 15px 5px 10px; padding-left: 14px; gap: 15px; border: 1px solid #a6a4a2; border-radius: 2px; }
.filters section { display: grid; grid-template-columns: 1fr auto; padding: 0 10px; margin-bottom: 34px; row-gap: 11px; align-items: center; }
.filters section:first-of-type { border-top: 1px solid #a19f9d; padding-top: 21px; }
.more { font-size: 20px; line-height: 16px; padding-right: 5px; }
.drop { grid-column: span 2; height: 57px; border: 1px solid #c8c6c4; border-radius: 2px; display: flex; align-items: center; justify-content: center; }

.viz { width: 226px; border-left: 1px solid #dddbd9; border-right: 1px solid #dddbd9; }
.viz header { padding: 0 8px 0 9px; }
.viz > h3 { padding-left: 9px; margin-bottom: 6px; line-height: 16px; }
.modes { display: flex; gap: 43px; padding-left: 9px; }
.modes button { width: 40px; height: 40px; display: flex; align-items: center; justify-content: center; border-radius: 2px; }
.modes .on { background: #d2d0ce; }
.tabline { width: 100%; height: 11px; margin-top: 5px; }
.gallery { display: grid; grid-template-columns: repeat(6, 23px); gap: 12px; padding: 14px 0 0 13px; grid-auto-rows: 23px; }
.gallery svg { width: 23px; overflow: visible; }
.w { fill: #fff; stroke: #797775; } .w2 { fill: #fff; stroke: #484644; stroke-width: 1.5; }
.b { fill: #83b9e9; stroke: #106ebe; stroke-width: 1.3; }
.g { fill: #c8c6c4; stroke: #797775; }
.o { fill: #f5a24a; stroke: #d8700f; }
.z { fill: #fdc37a; stroke: #e07b10; }
.k { fill: none; stroke: #3b3a39; stroke-width: 1.5; }
.bl { fill: none; stroke: #2b88d8; stroke-width: 1.5; }
.num { font-size: 10px; fill: #2b88d8; text-anchor: middle; }
.py { font-weight: 700; font-size: 18px; fill: #1f86c9; text-anchor: middle; }
.dots { display: block; padding-left: 14px; height: 46px; font-size: 24px; line-height: 24px; padding-bottom: 18px; }
.wells { border-top: 1px solid #dddbd9; padding: 12px 6px 0 4px; }
.wells h4 { padding-left: 11px; }
.wells .strong { font-weight: 600; color: #484644; margin: 14px 0 6px; }
.well { border: 1px dashed #c8c6c4; background: #fff; height: 32px; line-height: 30px; padding-left: 10px; border-radius: 2px; white-space: nowrap; margin-top: 8px; }
.well.tall { height: 35px; line-height: 33px; padding-left: 13px; margin-top: 5px; }
.row { display: flex; justify-content: space-between; align-items: center; padding: 0 20px 0 11px; height: 34px; }
.wells .row:first-of-type { margin-top: -2px; }
.switch { position: relative; width: 40px; height: 20px; }
.switch input { appearance: none; display: block; width: 40px; height: 20px; border-radius: 10px; border: 1px solid #797775; background: #fff; padding: 4px 5px; }
.switch input::before { content: ""; display: block; width: 10px; height: 10px; border-radius: 50%; background: #605e5c; }
.switch input:checked { background: #117865; border-color: #117865; }
.switch input:checked::before { background: #fff; margin-left: 18px; }
.switch i { position: absolute; right: 6px; top: 0; font-style: normal; font-size: 11px; color: #605e5c; }
.switch input:checked + i { right: auto; left: 6px; color: #fff; }

.fields { width: 200px; }
.fields header { padding-left: 11px; }
.fields .find { margin: 8px -8px 0 6px; height: 30px; border: 1px solid #d2d0ce; border-bottom-color: #605e5c; border-radius: 4px; padding-left: 15px; gap: 8px; }
.fields .find input { color: #605e5c; }
.fields .find input::placeholder { color: #605e5c; }
.table { display: flex; align-items: center; gap: 4px; padding-left: 16px; height: 30px; margin-top: 11px; white-space: nowrap; }
.table svg + svg { margin-right: 2px; }
.fields label:not(.find) { display: flex; align-items: center; height: 30px; padding-left: 55px; white-space: nowrap; }
.fields li input { appearance: none; width: 15px; height: 15px; border: 1px solid #797775; border-radius: 3px; background: #f8f7f6; flex: none; margin-right: 11px; }
.fields li svg { width: 14px; height: 16px; margin-right: 8px; }
```
